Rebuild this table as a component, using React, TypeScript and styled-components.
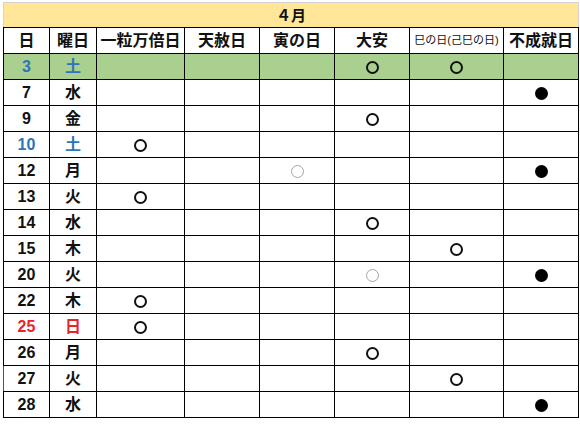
import React from "react";
import styled, { createGlobalStyle } from "styled-components";

const GlobalStyle = createGlobalStyle`
  html, body {
    margin: 0;
    padding: 0;
    background: #ffffff;
  }
  body {
    font-family: "Liberation Sans", "Noto Sans CJK JP", sans-serif;
  }
`;

type MarkKind = "circle" | "faint" | "dot";
type DayTone = "plain" | "sat" | "sun";
type ColumnKey = "ichiryu" | "tensha" | "tora" | "taian" | "mi" | "fujoju";

interface DayRow {
  day: number;
  weekday: string;
  tone: DayTone;
  highlight?: boolean;
  selected?: boolean;
  marks: Partial<Record<ColumnKey, MarkKind>>;
}

const columns: { key: ColumnKey; label: string; small?: boolean }[] = [
  { key: "ichiryu", label: "一粒万倍日" },
  { key: "tensha", label: "天赦日" },
  { key: "tora", label: "寅の日" },
  { key: "taian", label: "大安" },
  { key: "mi", label: "巳の日(己巳の日)", small: true },
  { key: "fujoju", label: "不成就日" },
];

const colWidths = [46, 47, 88, 75, 75, 75, 94, 75];

const rows: DayRow[] = [
  { day: 3, weekday: "土", tone: "sat", highlight: true, marks: { taian: "circle", mi: "circle" } },
  { day: 7, weekday: "水", tone: "plain", marks: { fujoju: "dot" } },
  { day: 9, weekday: "金", tone: "plain", marks: { taian: "circle" } },
  { day: 10, weekday: "土", tone: "sat", marks: { ichiryu: "circle" } },
  { day: 12, weekday: "月", tone: "plain", marks: { tora: "faint", fujoju: "dot" } },
  { day: 13, weekday: "火", tone: "plain", marks: { ichiryu: "circle" } },
  { day: 14, weekday: "水", tone: "plain", marks: { taian: "circle" } },
  { day: 15, weekday: "木", tone: "plain", marks: { mi: "circle" } },
  { day: 20, weekday: "火", tone: "plain", marks: { taian: "faint", fujoju: "dot" } },
  { day: 22, weekday: "木", tone: "plain", marks: { ichiryu: "circle" } },
  { day: 25, weekday: "日", tone: "sun", marks: { ichiryu: "circle" } },
  { day: 26, weekday: "月", tone: "plain", marks: { taian: "circle" } },
  { day: 27, weekday: "火", tone: "plain", selected: true, marks: { mi: "circle" } },
  { day: 28, weekday: "水", tone: "plain", marks: { fujoju: "dot" } },
];

const toneColor: Record<DayTone, string> = {
  plain: "#111111",
  sat: "#2E75B6",
  sun: "#E8242A",
};

const Sheet = styled.div`
  padding: 2px 0 0 3px;
  width: 580px;
  height: 424px;
  box-sizing: border-box;
  overflow: hidden;
  background: #ffffff;
`;

const Table = styled.table`
  border-collapse: collapse;
  table-layout: fixed;
  width: 576px;
`;

const TitleCell = styled.td`
  height: 24px;
  padding: 0;
  background: #ffe699;
  border: 1px solid #d4d4d4;
  border-bottom: 1px solid #000000;
  text-align: center;
  vertical-align: middle;
  font-size: 15px;
  font-weight: 700;
  line-height: 1;
  color: #111111;
`;

const HeadCell = styled.th<{ $small?: boolean }>`
  height: 25px;
  padding: 0;
  border: 1px solid #000000;
  background: #ffffff;
  text-align: center;
  vertical-align: middle;
  font-size: ${(p) => (p.$small ? "11px" : "16px")};
  font-weight: ${(p) => (p.$small ? 400 : 700)};
  line-height: 1;
  color: #111111;
  white-space: nowrap;
  overflow: hidden;
`;

const BodyRow = styled.tr<{ $highlight?: boolean }>`
  background: ${(p) => (p.$highlight ? "#a9d08e" : "#ffffff")};
`;

const Cell = styled.td<{ $tone?: DayTone; $digits?: boolean; $selected?: boolean }>`
  height: 25px;
  padding: 0;
  border: 1px solid #000000;
  ${(p) => (p.$selected ? "border-left-color: #1e7145;" : "")}
  text-align: center;
  vertical-align: middle;
  font-size: 16px;
  font-weight: 700;
  line-height: 1;
  color: ${(p) => toneColor[p.$tone ?? "plain"]};
`;

const Mark = styled.span<{ $kind: MarkKind }>`
  display: inline-block;
  box-sizing: border-box;
  vertical-align: middle;
  border-radius: 50%;
  width: 13px;
  height: 13px;
  background: ${(p) => (p.$kind === "dot" ? "#000000" : "transparent")};
  border: ${(p) =>
    p.$kind === "dot" ? "none" : p.$kind === "faint" ? "1.5px solid #a6a6a6" : "2px solid #111111"};
`;

export default function App() {
  return (
    <>
      <GlobalStyle />
      <Sheet>
        <Table>
          <colgroup>
            {colWidths.map((w, i) => (
              <col key={i} style={{ width: w }} />
            ))}
          </colgroup>
          <thead>
            <tr>
              <TitleCell colSpan={8}>４月</TitleCell>
            </tr>
            <tr>
              <HeadCell>日</HeadCell>
              <HeadCell>曜日</HeadCell>
              {columns.map((c) => (
                <HeadCell key={c.key} $small={c.small}>
                  {c.label}
                </HeadCell>
              ))}
            </tr>
          </thead>
          <tbody>
            {rows.map((r) => (
              <BodyRow key={r.day} $highlight={r.highlight}>
                <Cell $tone={r.tone} $digits $selected={r.selected}>
                  {r.day}
                </Cell>
                <Cell $tone={r.tone}>{r.weekday}</Cell>
                {columns.map((c) => {
                  const kind = r.marks[c.key];
                  return <Cell key={c.key}>{kind ? <Mark $kind={kind} /> : null}</Cell>;
                })}
              </BodyRow>
            ))}
          </tbody>
        </Table>
      </Sheet>
    </>
  );
}
